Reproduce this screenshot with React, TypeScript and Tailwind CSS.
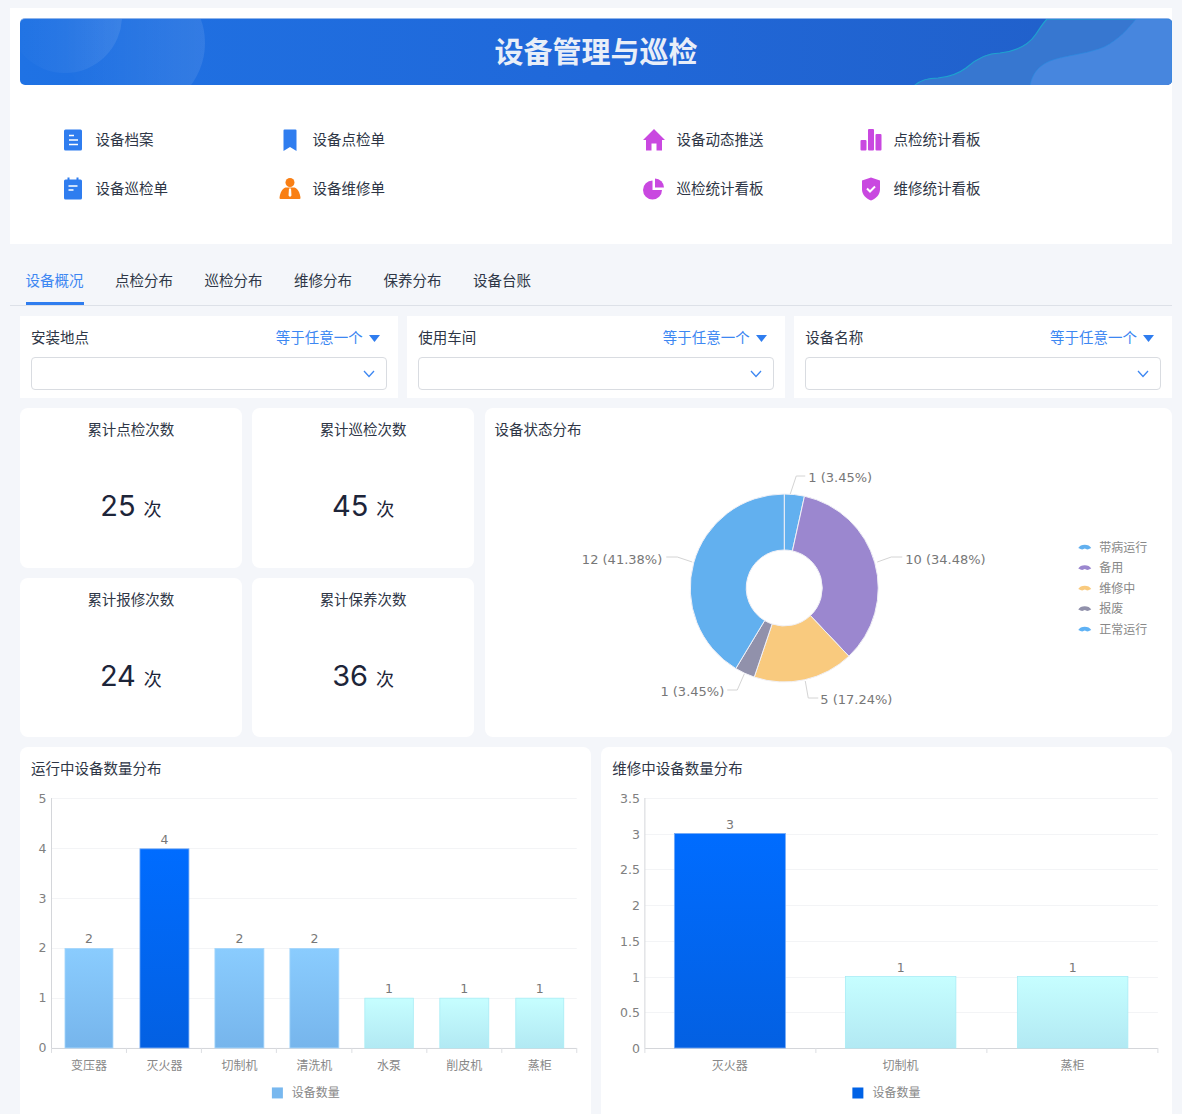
import React from 'react';

const FONT = "font-['Inter','Noto_Sans_CJK_SC',sans-serif]";
const CHART_FONT = "font-['DejaVu_Sans','Noto_Sans_CJK_SC',sans-serif]";

const DocIcon = () => (
    <svg width="22" height="24" viewBox="0 0 22 24">
        <rect x="2" y="1.5" width="18" height="21" rx="1.5" fill="#2f7def" />
        <path d="M7 7.500h5M7 12h9M7 16.500h9" stroke="#fff" strokeWidth="1.5" />
    </svg>
);
const NoteIcon = () => (
    <svg width="22" height="24" viewBox="0 0 22 24">
        <rect x="2" y="2.500" width="18" height="20" rx="1.5" fill="#2f7def" />
        <path d="M6.500 0.500v3M15.500 0.500v3" stroke="#2f7def" strokeWidth="2" />
        <path d="M6.500 9h9M6.500 13h5" stroke="#fff" strokeWidth="1.6" />
    </svg>
);
const BookmarkIcon = () => (
    <svg width="22" height="24" viewBox="0 0 22 24">
        <path d="M4.500 2.500a1 1 0 0 1 1-1h11a1 1 0 0 1 1 1v20.500l-6.500-4-6.500 4z" fill="#2f7def" />
    </svg>
);
const PersonIcon = () => (
    <svg width="22" height="24" viewBox="0 0 22 24">
        <circle cx="11" cy="5.500" r="4.500" fill="#f97f14" />
        <path d="M6.500 10.500h9c3 1 5.500 5 6 10.500a1 1 0 0 1-1 1h-19a1 1 0 0 1-1-1c.5-5.500 3-9.500 6-10.500z" fill="#f97f14" />
        <path d="M10 11.500h2l.5 7-1.500 1.500-1.500-1.500z" fill="#fff" />
    </svg>
);
const HouseIcon = () => (
    <svg width="22" height="24" viewBox="0 0 22 24">
        <path d="M11 1 22 12h-3v10.500h-5.500v-7h-5v7H3V12H0z" fill="#c948e0" />
    </svg>
);
const PieIcon = () => (
    <svg width="22" height="24" viewBox="0 0 22 24">
        <path d="M9.500 3.500a9.500 9.500 0 1 0 9.500 9.500H9.500z" fill="#c948e0" />
        <path d="M12 1.500a9 9 0 0 1 9 9h-9z" fill="#c948e0" />
    </svg>
);
const BarsIcon = () => (
    <svg width="22" height="24" viewBox="0 0 22 24">
        <rect x="0.500" y="12" width="6" height="10.500" rx="1" fill="#c948e0" />
        <rect x="8" y="1" width="6" height="21.500" rx="1" fill="#c948e0" />
        <rect x="15.500" y="6" width="6" height="16.500" rx="1" fill="#c948e0" />
    </svg>
);
const ShieldIcon = () => (
    <svg width="22" height="24" viewBox="0 0 22 24">
        <path d="M11 .5 20 3.500v9c0 5-4 9-9 11-5-2-9-6-9-11v-9z" fill="#c948e0" />
        <path d="M7 11.500l3 3 5-5" fill="none" stroke="#fff" strokeWidth="2" />
    </svg>
);

const shortcuts = [
    { label: '设备档案', icon: <DocIcon /> },
    { label: '设备点检单', icon: <BookmarkIcon /> },
    { label: '', icon: null },
    { label: '设备动态推送', icon: <HouseIcon /> },
    { label: '点检统计看板', icon: <BarsIcon /> },
    { label: '设备巡检单', icon: <NoteIcon /> },
    { label: '设备维修单', icon: <PersonIcon /> },
    { label: '', icon: null },
    { label: '巡检统计看板', icon: <PieIcon /> },
    { label: '维修统计看板', icon: <ShieldIcon /> },
];

const tabs = ['设备概况', '点检分布', '巡检分布', '维修分布', '保养分布', '设备台账'];
const filters = ['安装地点', '使用车间', '设备名称'];

const Banner = () => (
    <div className="relative h-[67px] overflow-hidden rounded-[5px] border-t border-[#8fb4ea] bg-gradient-to-r from-[#1f72e4] via-[#2068d9] to-[#215fc8] flex items-center justify-center">
        <svg className="absolute inset-0" width="1152" height="67" viewBox="20 18 1152 67">
            <defs>
                <linearGradient id="fade" x1="0" x2="1" y1="0" y2="0">
                    <stop offset="0" stopColor="#fff" stopOpacity="0" />
                    <stop offset="1" stopColor="#fff" stopOpacity="0.09" />
                </linearGradient>
            </defs>
            <circle cx="135" cy="42" r="70" fill="url(#fade)" />
            <circle cx="65" cy="15" r="57" fill="url(#fade)" />
            <path d="M914 85C920 79 928 77 938 77C950 76 958 73 966 67C976 58 986 52 1000 52C1018 50 1030 42 1036 33C1040 27 1043 22 1047 18H1172V85Z" fill="#3777d0" stroke="#1ea3cf" strokeWidth="1.2" />
            <path d="M1030 85C1032 72 1040 62 1056 58C1070 54 1090 52 1104 46C1118 39 1128 28 1136 18H1172V85Z" fill="#4786de" stroke="#2a8be0" strokeWidth="0.6" />
        </svg>
        <h1 className="relative text-[29px] font-bold leading-none text-[#e8eef8]">设备管理与巡检</h1>
    </div>
);

const FilterCard = ({ label }: { label: string }) => (
    <div className="bg-white px-[11px] pt-[10px] h-[82px]">
        <div className="flex items-center justify-between h-[24px] text-[14.500px]">
            <span className="text-[#2e3646]">{label}</span>
            <span className="flex items-center gap-[6px] pr-[7px] text-[#3d87f2]">
                等于任意一个
                <svg width="11" height="7" viewBox="0 0 11 7"><path d="M0 0h11L5.500 7z" fill="#2f7def" /></svg>
            </span>
        </div>
        <div className="mt-[7px] h-[33px] rounded-[4px] border border-[#d9dce1] bg-white flex items-center justify-end pr-[11px]">
            <svg width="12" height="8" viewBox="0 0 12 8"><path d="M1 1l5 5.500L11 1" fill="none" stroke="#3d87f2" strokeWidth="1.300" /></svg>
        </div>
    </div>
);

const KpiCard = ({ title, value, h }: { title: string; value: number; h: string }) => (
    <div className={`rounded-[8px] bg-white pt-[10px] text-center ${h}`}>
        <div className="text-[14.500px] leading-[24px] text-[#2e3646]">{title}</div>
        <div className="mt-[39px] flex items-baseline justify-center gap-[8px] text-[#1d2539]">
            <span className="text-[29px] leading-[50px]">{value}</span>
            <span className="text-[18px]">次</span>
        </div>
    </div>
);

const pieData = [
    { value: 1, color: '#62b0ef' },
    { value: 10, color: '#9b87cf' },
    { value: 5, color: '#f9ca7e' },
    { value: 1, color: '#9191ab' },
    { value: 12, color: '#62b0ef' },
];

function slicePath(start: number, end: number) {
    const cx = 784, cy = 588, R = 94, r = 38;
    const p = (rad: number, a: number) => `${cx + rad * Math.sin(a)} ${cy - rad * Math.cos(a)}`;
    const large = end - start > Math.PI ? 1 : 0;
    return `M${p(R, start)}A${R} ${R} 0 ${large} 1 ${p(R, end)}L${p(r, end)}A${r} ${r} 0 ${large} 0 ${p(r, start)}Z`;
}

const pieLabels = [
    { line: '790,494 796,476 805,476', x: 808, y: 482, anchor: 'start', text: '1 (3.45%)' },
    { line: '877,562 891,557 902,557', x: 905, y: 564, anchor: 'start', text: '10 (34.48%)' },
    { line: '805,681 808,698 818,698', x: 820, y: 704, anchor: 'start', text: '5 (17.24%)' },
    { line: '744,674 737,690 727,690', x: 724, y: 696, anchor: 'end', text: '1 (3.45%)' },
    { line: '692,562 677,557 666,557', x: 662, y: 564, anchor: 'end', text: '12 (41.38%)' },
];

const pieLegend = [
    { text: '带病运行', y: 547, color: '#62b0ef' },
    { text: '备用', y: 567.5, color: '#9b87cf' },
    { text: '维修中', y: 588, color: '#f9ca7e' },
    { text: '报废', y: 608.5, color: '#9191ab' },
    { text: '正常运行', y: 629, color: '#5fb2f5' },
];

const PieChart = () => {
    let acc = 0;
    const total = 29;
    return (
        <svg className={`block h-[285px] w-full ${CHART_FONT}`} viewBox="485 452 687 285">
            {pieData.map((d) => {
                const start = (acc / total) * Math.PI * 2;
                acc += d.value;
                const end = (acc / total) * Math.PI * 2;
                return <path key={start} d={slicePath(start, end)} fill={d.color} stroke="#f0f0f6" strokeWidth="1" />;
            })}
            {pieLabels.map((l) => (
                <g key={l.x}>
                    <polyline points={l.line} fill="none" stroke="#d4d4d4" strokeWidth="1" />
                    <text x={l.x} y={l.y} textAnchor={l.anchor as 'start' | 'end'} fontSize="13" fill="#777">{l.text}</text>
                </g>
            ))}
            {pieLegend.map((l) => (
                <g key={l.text}>
                    <path d={`M1078 ${l.y + 1}C1080 ${l.y - 3.500} 1089 ${l.y - 3.500} 1091 ${l.y + 1}C1089 ${l.y + 1.500} 1088.500 ${l.y + 2.500} 1087 ${l.y + 2.500}C1086 ${l.y + 2.500} 1085.500 ${l.y + 1.500} 1084.500 ${l.y + 1.500}C1083.500 ${l.y + 1.500} 1083 ${l.y + 2.500} 1082 ${l.y + 2.500}C1080.500 ${l.y + 2.500} 1080 ${l.y + 1.500} 1078 ${l.y + 1}Z`} fill={l.color} />
                    <text x="1099" y={l.y + 4.500} fontSize="12" fill="#888">{l.text}</text>
                </g>
            ))}
        </svg>
    );
};

type Bar = { name: string; value: number; x: number; w: number; tone: 'mid' | 'dark' | 'pale' };

const tones = {
    mid: { fill: 'url(#barMid)', stroke: '#a6d6fb' },
    dark: { fill: 'url(#barDark)', stroke: '#73a9f5' },
    pale: { fill: 'url(#barPale)', stroke: '#a8ecf5' },
};

const BarChart = (props: {
    viewBox: string;
    axisX: number;
    endX: number;
    ticks: { label: string; y: number }[];
    bars: Bar[];
    unit: number;
    sepXs: number[];
    legendX: number;
    legendColor: string;
}) => (
    <svg className={`block h-[324px] w-full ${CHART_FONT}`} viewBox={props.viewBox}>
        <defs>
            <linearGradient id="barMid" x1="0" x2="0" y1="0" y2="1">
                <stop offset="0" stopColor="#8accfe" />
                <stop offset="1" stopColor="#76b5ec" />
            </linearGradient>
            <linearGradient id="barDark" x1="0" x2="0" y1="0" y2="1">
                <stop offset="0" stopColor="#006cff" />
                <stop offset="1" stopColor="#0360e2" />
            </linearGradient>
            <linearGradient id="barPale" x1="0" x2="0" y1="0" y2="1">
                <stop offset="0" stopColor="#c6feff" />
                <stop offset="1" stopColor="#b2e9f3" />
            </linearGradient>
        </defs>
        {props.ticks.map((t) => (
            <g key={t.label}>
                {t.y < 1048 && <line x1={props.axisX} x2={props.endX} y1={t.y + 0.5} y2={t.y + 0.5} stroke="#f3f4f6" />}
                <text x={props.axisX - 5} y={t.y + 4.500} textAnchor="end" fontSize="12.500" fill="#808080">{t.label}</text>
            </g>
        ))}
        <line x1={props.axisX} x2={props.axisX} y1="798" y2="1048" stroke="#d4d6da" />
        <line x1={props.axisX} x2={props.endX} y1="1048.500" y2="1048.500" stroke="#d4d6da" />
        {props.sepXs.map((x) => (
            <line key={x} x1={x} x2={x} y1="1048" y2="1053" stroke="#dcdee2" />
        ))}
        {props.bars.map((b) => {
            const top = 1048 - b.value * props.unit;
            const cx = b.x + b.w / 2;
            return (
                <g key={b.name}>
                    <rect x={b.x} y={top} width={b.w} height={b.value * props.unit} fill={tones[b.tone].fill} stroke={tones[b.tone].stroke} strokeWidth="0.8" />
                    <text x={cx} y={top - 5} textAnchor="middle" fontSize="12.500" fill="#777">{b.value}</text>
                    <text x={cx} y="1070" textAnchor="middle" fontSize="12" fill="#888">{b.name}</text>
                </g>
            );
        })}
        <rect x={props.legendX} y="1087.500" width="11" height="11" fill={props.legendColor} />
        <text x={props.legendX + 20} y="1097" fontSize="12" fill="#888">设备数量</text>
    </svg>
);

const leftBars: Bar[] = [
    { name: '变压器', value: 2, x: 65, w: 48, tone: 'mid' },
    { name: '灭火器', value: 4, x: 140, w: 49, tone: 'dark' },
    { name: '切制机', value: 2, x: 215, w: 49, tone: 'mid' },
    { name: '清洗机', value: 2, x: 290, w: 49, tone: 'mid' },
    { name: '水泵', value: 1, x: 365, w: 48.500, tone: 'pale' },
    { name: '削皮机', value: 1, x: 440, w: 49, tone: 'pale' },
    { name: '蒸柜', value: 1, x: 516, w: 48, tone: 'pale' },
];
const rightBars: Bar[] = [
    { name: '灭火器', value: 3, x: 675, w: 111, tone: 'dark' },
    { name: '切制机', value: 1, x: 846, w: 110.500, tone: 'pale' },
    { name: '蒸柜', value: 1, x: 1018, w: 110.500, tone: 'pale' },
];

const App: React.FC = () => (
    <div className={`h-[1114px] overflow-hidden bg-[#f4f6fa] px-[10px] pt-[8px] ${FONT}`}>
        <section className="bg-white pl-[10px] pt-[10px] h-[236px]">
            <Banner />
            <div className="mt-[43px] ml-[42px] grid grid-cols-[217px_145px_219px_217px_1fr] gap-y-[25px]">
                {shortcuts.map((s, i) => (
                    <div key={i} className="flex h-[24px] items-center gap-[11.500px] text-[14.500px] text-[#2e3646]">
                        {s.icon}
                        <span>{s.label}</span>
                    </div>
                ))}
            </div>
        </section>

        <nav className="mt-[18px] flex h-[44px] gap-[31.500px] border-b border-[#dde1e8] pl-[15.500px]">
            {tabs.map((t, i) => (
                <div key={t} className={`h-[43px] pt-[7px] text-[14.500px] leading-[24px] ${i === 0 ? 'border-b-[3px] border-[#2f7def] text-[#3d87f2]' : 'text-[#2e3646]'}`}>{t}</div>
            ))}
        </nav>

        <div className="pl-[10px]">
            <div className="mt-[10px] grid grid-cols-3 gap-[9.500px]">
                {filters.map((f) => <FilterCard key={f} label={f} />)}
            </div>

            <div className="mt-[10px] grid grid-cols-[222px_221.500px_1fr] gap-x-[10.500px]">
                <div className="col-span-2 grid grid-cols-2 gap-x-[10.500px] gap-y-[10px]">
                    <KpiCard title="累计点检次数" value={25} h="h-[160px]" />
                    <KpiCard title="累计巡检次数" value={45} h="h-[160px]" />
                    <KpiCard title="累计报修次数" value={24} h="h-[159px]" />
                    <KpiCard title="累计保养次数" value={36} h="h-[159px]" />
                </div>
                <div className="rounded-[8px] bg-white">
                    <div className="h-[44px] px-[10px] pt-[10px] text-[14.500px] leading-[24px] text-[#2e3646]">设备状态分布</div>
                    <PieChart />
                </div>
            </div>

            <div className="mt-[10px] grid grid-cols-2 gap-x-[10.500px]">
                <div className="h-[367px] rounded-t-[8px] bg-white">
                    <div className="h-[43px] px-[11px] pt-[10px] text-[14.500px] leading-[24px] text-[#2e3646]">运行中设备数量分布</div>
                    <BarChart
                        viewBox="20 790 571 324"
                        axisX={51.500}
                        endX={577}
                        unit={49.800}
                        ticks={[
                            { label: '5', y: 798 }, { label: '4', y: 848 }, { label: '3', y: 898 },
                            { label: '2', y: 948 }, { label: '1', y: 998 }, { label: '0', y: 1048 },
                        ]}
                        bars={leftBars}
                        sepXs={[51.500, 126.500, 201.500, 276.500, 352, 427, 502, 577]}
                        legendX={272}
                        legendColor="#78b8ef"
                    />
                </div>
                <div className="h-[367px] rounded-t-[8px] bg-white">
                    <div className="h-[43px] px-[11px] pt-[10px] text-[14.500px] leading-[24px] text-[#2e3646]">维修中设备数量分布</div>
                    <BarChart
                        viewBox="602 790 570 324"
                        axisX={645.500}
                        endX={1158.500}
                        unit={71.500}
                        ticks={[
                            { label: '3.5', y: 798 }, { label: '3', y: 834 }, { label: '2.5', y: 869 },
                            { label: '2', y: 905 }, { label: '1.5', y: 941 }, { label: '1', y: 977 },
                            { label: '0.5', y: 1012 }, { label: '0', y: 1048 },
                        ]}
                        bars={rightBars}
                        sepXs={[645.500, 816.500, 987.500, 1158.500]}
                        legendX={853}
                        legendColor="#0062e6"
                    />
                </div>
            </div>
        </div>
    </div>
);

export default App;
